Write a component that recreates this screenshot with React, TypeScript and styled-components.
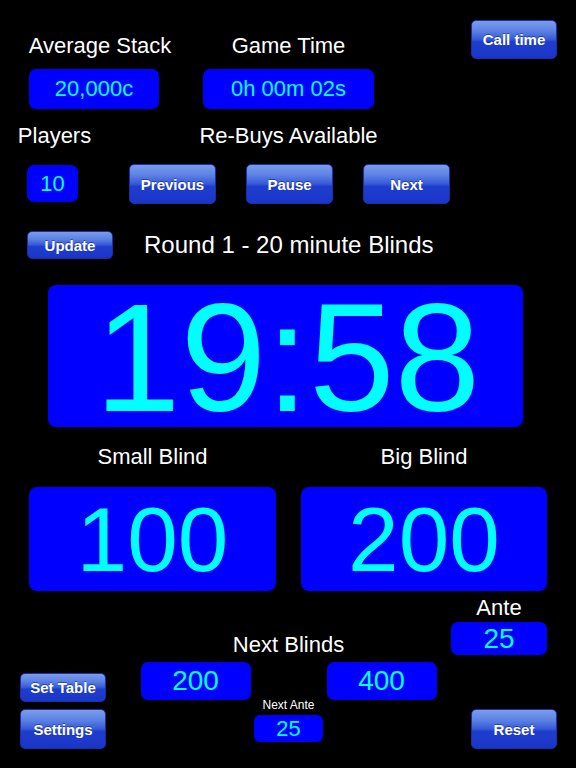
import styled, { createGlobalStyle } from 'styled-components';

const GlobalStyle = createGlobalStyle`
  html, body {
    margin: 0;
    padding: 0;
    background: #000;
  }
  * {
    box-sizing: border-box;
  }
`;

const Page = styled.div`
  width: 576px;
  min-height: 100vh;
  display: flex;
  flex-direction: column;
  background: #000;
  font-family: 'Liberation Sans', Arial, Helvetica, sans-serif;
  color: #fff;
`;

const TopRow = styled.div`
  display: flex;
  align-items: flex-start;
  padding: 20px 0 0 29px;
`;

const StatGroup = styled.div<{ $w: number; $ml?: number; $gap: number; $mt?: number }>`
  display: flex;
  flex-direction: column;
  align-items: center;
  width: ${(p) => p.$w}px;
  margin-left: ${(p) => p.$ml ?? 0}px;
  margin-top: ${(p) => p.$mt ?? 0}px;
  gap: ${(p) => p.$gap}px;
`;

const Label = styled.div<{ $size?: number; $lh?: number; $nudge?: number }>`
  font-size: ${(p) => p.$size ?? 22}px;
  line-height: ${(p) => p.$lh ?? 26}px;
  margin-left: ${(p) => (p.$nudge ?? 0) * 2}px;
  color: #fff;
  white-space: nowrap;
`;

const ValueBox = styled.div<{ $w: number; $h: number; $size: number; $radius?: number }>`
  width: ${(p) => p.$w}px;
  height: ${(p) => p.$h}px;
  flex-shrink: 0;
  display: flex;
  align-items: center;
  justify-content: center;
  background: #0000ff;
  border-radius: ${(p) => p.$radius ?? 7}px;
  color: #00ffff;
  font-size: ${(p) => p.$size}px;
  line-height: 1;
  white-space: nowrap;
`;

const GlossButton = styled.button<{ $w: number; $h: number; $ml?: number }>`
  width: ${(p) => p.$w}px;
  height: ${(p) => p.$h}px;
  margin: 0 0 0 ${(p) => p.$ml ?? 0}px;
  padding: 0;
  flex-shrink: 0;
  border: 1px solid #1a2fa8;
  border-radius: 5px;
  background: linear-gradient(
    to bottom,
    #7a9ded 0%,
    #5a80e4 28%,
    #3658d8 50%,
    #1f3dcd 56%,
    #1a36c9 100%
  );
  color: #fff;
  font-family: 'Liberation Sans', Arial, Helvetica, sans-serif;
  font-weight: 700;
  font-size: 15px;
  text-shadow: 0 -1px 0 rgba(0, 0, 40, 0.4);
  cursor: pointer;
`;

const SecondRow = styled.div`
  display: flex;
  align-items: flex-start;
  margin-top: 14px;
  padding-left: 27px;
`;

const ButtonRow = styled.div`
  display: flex;
  gap: 30px;
`;

const RoundRow = styled.div`
  display: flex;
  align-items: center;
  margin-top: 27px;
  padding-left: 27px;
`;

const RoundTitle = styled.div`
  margin-left: 31px;
  font-size: 24px;
  line-height: 28px;
  white-space: nowrap;
`;

const TimerBox = styled.div`
  margin: 26px 0 0 48px;
  width: 475px;
  height: 142px;
  display: flex;
  align-items: center;
  justify-content: center;
  padding: 3px 0 0 4px;
  background: #0000ff;
  border-radius: 8px;
  color: #00ffff;
  font-size: 154px;
  line-height: 1;
`;

const BlindsRow = styled.div`
  display: flex;
  gap: 25px;
  margin-top: 17px;
  padding-left: 29px;
`;

const BottomRow = styled.div`
  flex: 1;
  display: flex;
  padding: 0 0 19px 20px;
`;

const LeftCol = styled.div`
  width: 86px;
  display: flex;
  flex-direction: column;
  justify-content: flex-end;
  gap: 7px;
`;

const CenterCol = styled.div`
  width: 297px;
  margin-left: 34px;
  padding-top: 41px;
  display: flex;
  flex-direction: column;
  align-items: center;
`;

const NextBoxes = styled.div`
  display: flex;
  gap: 76px;
  margin-top: 4px;
`;

const SmallLabel = styled.div`
  margin-top: -2px;
  margin-bottom: 3px;
  font-size: 12px;
  line-height: 14px;
  white-space: nowrap;
`;

const RightCol = styled.div`
  width: 106px;
  margin-left: 14px;
  padding-top: 4px;
  display: flex;
  flex-direction: column;
  align-items: flex-start;
  justify-content: space-between;
`;

const AnteGroup = styled.div`
  width: 96px;
  display: flex;
  flex-direction: column;
  align-items: center;
  gap: 1px;
`;

const ResetSlot = styled.div`
  align-self: flex-end;
`;

export default function App() {
  return (
    <>
      <GlobalStyle />
      <Page>
        <TopRow>
          <StatGroup $w={130} $gap={10} $mt={13}>
            <Label $nudge={6}>Average Stack</Label>
            <ValueBox $w={130} $h={40} $size={22}>
              20,000c
            </ValueBox>
          </StatGroup>
          <StatGroup $w={171} $ml={44} $gap={10} $mt={13}>
            <Label>Game Time</Label>
            <ValueBox $w={171} $h={40} $size={22}>
              0h 00m 02s
            </ValueBox>
          </StatGroup>
          <GlossButton $w={86} $h={39} $ml={97}>
            Call time
          </GlossButton>
        </TopRow>

        <SecondRow>
          <StatGroup $w={51} $gap={16}>
            <Label $nudge={2}>Players</Label>
            <ValueBox $w={51} $h={37} $size={22}>
              10
            </ValueBox>
          </StatGroup>
          <StatGroup $w={321} $ml={51} $gap={15}>
            <Label $nudge={-1}>Re-Buys Available</Label>
            <ButtonRow>
              <GlossButton $w={87} $h={40}>
                Previous
              </GlossButton>
              <GlossButton $w={87} $h={40}>
                Pause
              </GlossButton>
              <GlossButton $w={87} $h={40}>
                Next
              </GlossButton>
            </ButtonRow>
          </StatGroup>
        </SecondRow>

        <RoundRow>
          <GlossButton $w={86} $h={28}>
            Update
          </GlossButton>
          <RoundTitle>Round 1 - 20 minute Blinds</RoundTitle>
        </RoundRow>

        <TimerBox>19:58</TimerBox>

        <BlindsRow>
          <StatGroup $w={247} $gap={17}>
            <Label>Small Blind</Label>
            <ValueBox $w={247} $h={104} $size={91} $radius={8}>
              100
            </ValueBox>
          </StatGroup>
          <StatGroup $w={246} $gap={17}>
            <Label>Big Blind</Label>
            <ValueBox $w={246} $h={104} $size={91} $radius={8}>
              200
            </ValueBox>
          </StatGroup>
        </BlindsRow>

        <BottomRow>
          <LeftCol>
            <GlossButton $w={86} $h={29}>
              Set Table
            </GlossButton>
            <GlossButton $w={86} $h={40}>
              Settings
            </GlossButton>
          </LeftCol>

          <CenterCol>
            <Label>Next Blinds</Label>
            <NextBoxes>
              <ValueBox $w={110} $h={38} $size={28}>
                200
              </ValueBox>
              <ValueBox $w={110} $h={38} $size={28}>
                400
              </ValueBox>
            </NextBoxes>
            <SmallLabel>Next Ante</SmallLabel>
            <ValueBox $w={69} $h={27} $size={22} $radius={6}>
              25
            </ValueBox>
          </CenterCol>

          <RightCol>
            <AnteGroup>
              <Label>Ante</Label>
              <ValueBox $w={96} $h={33} $size={28}>
                25
              </ValueBox>
            </AnteGroup>
            <ResetSlot>
              <GlossButton $w={86} $h={40}>
                Reset
              </GlossButton>
            </ResetSlot>
          </RightCol>
        </BottomRow>
      </Page>
    </>
  );
}
